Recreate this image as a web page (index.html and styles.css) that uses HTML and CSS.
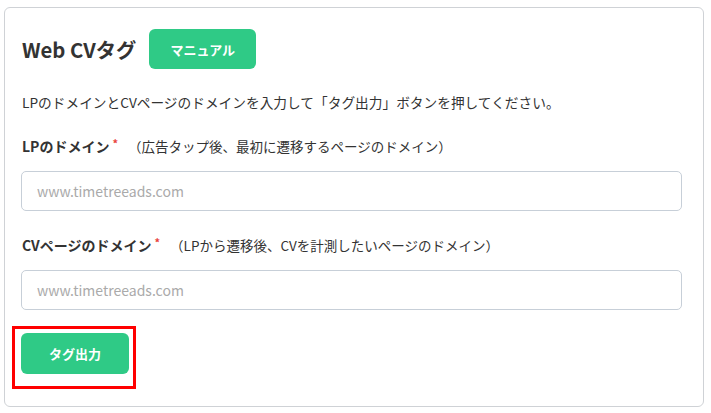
FILE: index.html
```html
<!DOCTYPE html>
<html lang="ja">
<head>
<meta charset="utf-8">
<link rel="stylesheet" href="styles.css">
</head>
<body>
<div class="card">
  <div class="header">
    <h1 class="title">Web CVタグ</h1>
    <button class="btn btn-manual">マニュアル</button>
  </div>
  <p class="desc">LPのドメインとCVページのドメインを入力して「タグ出力」ボタンを押してください。</p>
  <div class="field">
    <div class="label"><span class="label-main">LPのドメイン</span><span class="req">*</span><span class="hint">（広告タップ後、最初に遷移するページのドメイン）</span></div>
    <input class="input" type="text" placeholder="www.timetreeads.com">
  </div>
  <div class="field">
    <div class="label"><span class="label-main">CVページのドメイン</span><span class="req">*</span><span class="hint">（LPから遷移後、CVを計測したいページのドメイン）</span></div>
    <input class="input" type="text" placeholder="www.timetreeads.com">
  </div>
  <div class="highlight">
    <button class="btn btn-output">タグ出力</button>
  </div>
</div>
</body>
</html>
```
FILE: styles.css
```css
* { box-sizing: border-box; }
html, body { margin: 0; padding: 0; background: #fff; }
body {
  font-family: "Noto Sans CJK JP", "Noto Sans", sans-serif;
  color: #333;
}
.card {
  margin: 7px 0 0 4px;
  width: 700px;
  height: 400px;
  border: 1px solid #cfd2d6;
  border-radius: 6px;
  padding: 21px 22px 0 16px;
}
.header {
  display: flex;
  align-items: center;
  height: 40px;
}
.title {
  margin: 0 0 0 1px;
  font-size: 20.3px;
  font-weight: 700;
  line-height: 28px;
  color: #333;
}
.btn {
  font-family: inherit;
  border: none;
  background: #2fca86;
  color: #fff;
  font-weight: 700;
  border-radius: 6px;
  cursor: pointer;
  padding: 0;
}
.btn-manual {
  margin-left: 13px;
  width: 107px;
  height: 40px;
  font-size: 13px;
}
.desc {
  margin: 23px 0 0 1px;
  font-size: 13.7px;
  line-height: 20px;
}
.field { margin-top: 24px; }
.label {
  display: flex;
  align-items: center;
  height: 20px;
  line-height: 20px;
  margin-left: 1px;
}
.label-main {
  font-size: 14px;
  font-weight: 700;
}
.req {
  color: #e9433c;
  font-size: 11px;
  font-weight: 700;
  margin-left: 3px;
  position: relative;
  top: -3px;
}
.hint {
  font-size: 13.5px;
  margin-left: 10px;
}
.input {
  display: block;
  margin-top: 15px;
  width: 661px;
  height: 40px;
  border: 1px solid #c7cfd8;
  border-radius: 5px;
  padding: 0 15px;
  font-family: inherit;
  font-size: 14px;
  color: #333;
  outline: none;
}
.input::placeholder { color: #aaaaaa; }
.highlight {
  display: inline-block;
  margin: 16px 0 0 -9px;
  border: 3px solid #f00;
  padding: 4px 4px 12px 6px;
}
.btn-output {
  display: block;
  width: 108px;
  height: 41px;
  font-size: 13px;
}
```
